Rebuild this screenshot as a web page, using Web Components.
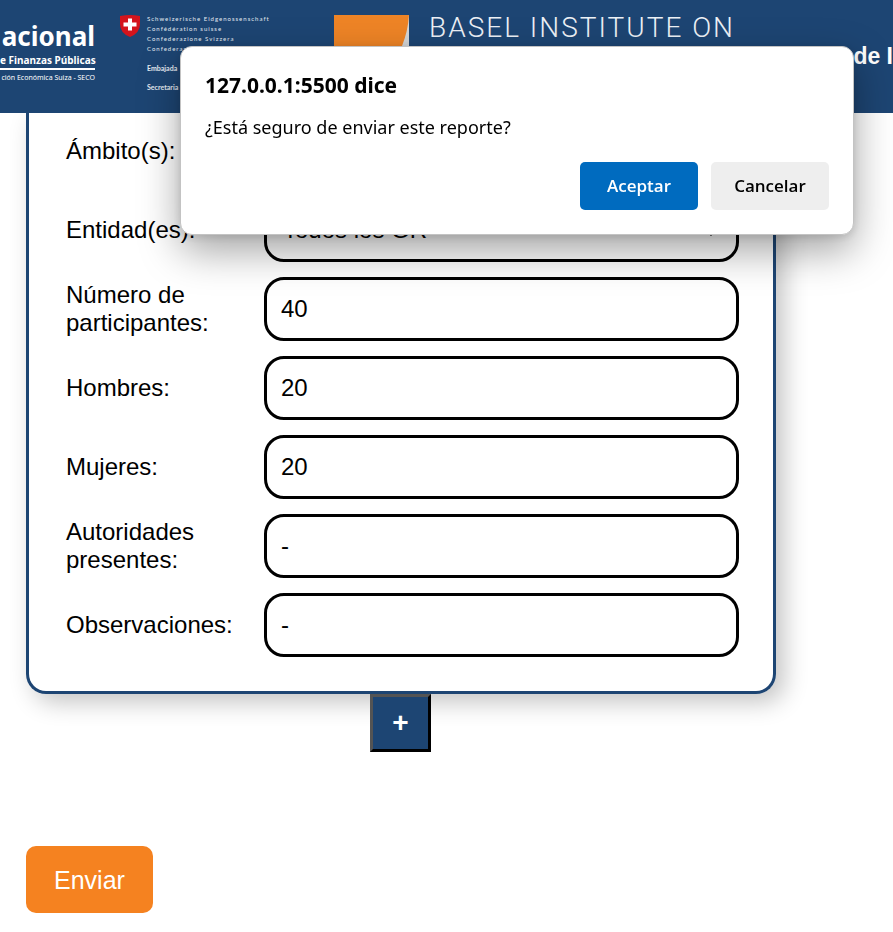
<!DOCTYPE html>
<html lang="es">
<head>
<meta charset="utf-8">
<meta name="viewport" content="width=device-width, initial-scale=1">
<title>Reporte</title>
<style>
  html, body { margin: 0; }
  body { background: #fff; color: #000; font: 24px/28px "Liberation Sans", Arial, sans-serif; --navy: #1d4573; --orange: #f58220; }
</style>
</head>
<body>
<report-page></report-page>

<script>
const define = (name, html, setup) => {
  const template = document.createElement('template');
  template.innerHTML = html;
  customElements.define(name, class extends HTMLElement {
    constructor() {
      super();
      this.attachShadow({ mode: 'open' }).append(template.content.cloneNode(true));
    }
    connectedCallback() { if (setup) setup(this, this.shadowRoot); }
  });
};

define('seco-logo', `
  <style>
    :host { display: flex; flex-direction: column; align-items: flex-end; flex: 0 0 95px; width: 95px; padding-top: 20px; color: #fff; white-space: nowrap; box-sizing: border-box; }
    .big { font: 700 26px/32px "Noto Sans", sans-serif; }
    .mid { font: 700 10px/16px "Noto Sans", sans-serif; width: 95px; text-align: right; border-bottom: 2px solid #fff; }
    .small { font: 7px/16px "Noto Sans", sans-serif; }
  </style>
  <span class="big">acional</span><span class="mid">e Finanzas Públicas</span><span class="small">ción Económica Suiza - SECO</span>`);

define('swiss-logo', `
  <style>
    :host { display: flex; gap: 7px; flex: 0 0 189px; padding-top: 14px; color: #e4ebf2; font: 6px/10px Lato, sans-serif; white-space: nowrap; }
    svg { width: 20px; height: 22px; flex: none; margin-top: 1px; }
    .names { letter-spacing: 1px; }
    .office { font: 700 7px/10px Lato, sans-serif; margin-top: 9px; }
  </style>
  <svg viewBox="0 0 20 22" aria-hidden="true"><path d="M0 1Q10-1 20 1V9Q20 18 10 22Q0 18 0 9Z" fill="#d4141c"/><path d="M8 3.500h4v4h4.500v4H12v4H8v-4H3.500v-4H8z" fill="#fff"/></svg>
  <div>
    <div class="names">Schweizerische Eidgenossenschaft<br>Confédération suisse<br>Confederazione Svizzera<br>Confederaziun svizra</div>
    <div class="office">Embajada</div>
    <div class="office">Secretaria</div>
  </div>`);

define('basel-logo', `
  <style>
    :host { display: flex; gap: 20px; flex: none; padding-top: 15px; color: #edf1f6; white-space: nowrap; }
    svg { width: 75px; height: 75px; }
    span { font: 300 28px/26px Roboto, sans-serif; letter-spacing: 2px; }
  </style>
  <svg viewBox="0 0 75 75" aria-hidden="true"><path fill="#d4d6d8" d="M0 0h75v75H0z"/><path fill="#ee8426" d="M0 0h75Q74 16 68 31Q55 60 0 75z"/></svg>
  <span>BASEL INSTITUTE ON</span>`);

define('site-header', `
  <style>
    :host { display: flex; gap: 25px; height: 113px; background: var(--navy); overflow: hidden; position: relative; z-index: 1; }
    .title { flex: 0 0 36px; margin: 0 0 2px auto; align-self: center; color: #fff; font-weight: 700; font-size: 23px; text-align: right; white-space: nowrap; }
  </style>
  <seco-logo></seco-logo><swiss-logo></swiss-logo><basel-logo></basel-logo>
  <div class="title">de I</div>`);

define('form-field', `
  <style>
    :host { display: grid; grid-template-columns: 198px 1fr; align-items: center; }
    label { padding-right: 20px; }
    input { box-sizing: border-box; width: 100%; height: 64px; border: 3px solid #000; border-radius: 20px; padding: 0 14px; font: inherit; color: inherit; background: #fff; }
  </style>
  <label for="control"></label><input id="control" type="text">`,
  (host, root) => {
    root.querySelector('label').textContent = host.getAttribute('label');
    root.querySelector('input').value = host.getAttribute('value');
  });

define('form-select', `
  <style>
    :host { display: grid; grid-template-columns: 198px 1fr; align-items: center; }
    .box { display: grid; align-items: center; }
    select, svg { grid-area: 1 / 1; }
    select { box-sizing: border-box; width: 100%; height: 64px; border: 3px solid #000; border-radius: 20px; padding: 0 16px; font: inherit; color: inherit; background: #fff; appearance: none; }
    svg { justify-self: end; width: 14px; height: 12px; margin-right: 21px; pointer-events: none; }
  </style>
  <label for="control"></label>
  <div class="box"><select id="control"><option></option></select>
  <svg viewBox="0 0 14 12" fill="none" stroke="#000" stroke-width="2" aria-hidden="true"><path d="M1 4.500l6 6 6-6"/></svg></div>`,
  (host, root) => {
    root.querySelector('label').textContent = host.getAttribute('label');
    root.querySelector('option').textContent = host.getAttribute('value');
  });

define('report-card', `
  <style>
    :host { display: flex; flex-direction: column; gap: 15px; margin: 0 117px 0 26px; padding: 6px 34px 34px 37px; border: 3px solid var(--navy); border-top: 0; border-radius: 0 0 20px 20px; box-shadow: 8px 8px 25px rgba(0,0,0,.24); }
  </style>
  <slot></slot>`);

define('add-button', `
  <style>
    :host { display: flex; justify-content: center; margin: 0 118px 0 26px; }
    button { width: 61px; height: 58px; padding: 0; border: 3px outset #000; background: var(--navy); color: #fff; font: 700 28px/28px "Liberation Sans", Arial, sans-serif; }
  </style>
  <button type="button" aria-label="Agregar">+</button>`);

define('submit-button', `
  <style>
    :host { display: block; margin: 94px 26px 19px; }
    button { padding: 0 28px; height: 67px; border: 0; border-radius: 10px; background: var(--orange); color: #fff; font: 25px/28px "Liberation Sans", Arial, sans-serif; display: block; }
  </style>
  <button type="submit"><slot></slot></button>`);

define('confirm-dialog', `
  <style>
    :host { position: fixed; z-index: 2; top: 46px; right: 39px; width: 674px; box-sizing: border-box; padding: 26px 24px 24px; background: #fff; border: 1px solid #c3c3c3; border-radius: 12px; box-shadow: 0 16px 40px rgba(0,0,0,.36), 0 2px 8px rgba(0,0,0,.12); font-family: "Noto Sans", sans-serif; }
    h2 { margin: 0; font-size: 21px; line-height: 24px; font-weight: 700; }
    p { margin: 19px 0 24px; font-size: 18px; line-height: 22px; }
    .actions { display: flex; justify-content: flex-end; gap: 13px; }
    button { width: 118px; height: 48px; padding: 0; border: 0; border-radius: 5px; font: 600 17px/24px "Open Sans", "Noto Sans", sans-serif; background: #eee; color: #000; }
    .primary { background: #006bbf; color: #fff; }
  </style>
  <div role="alertdialog" aria-labelledby="t" aria-describedby="m">
    <h2 id="t">127.0.0.1:5500 dice</h2>
    <p id="m">¿Está seguro de enviar este reporte?</p>
    <div class="actions"><button class="primary" type="button">Aceptar</button><button type="button">Cancelar</button></div>
  </div>`);

define('report-page', `
  <style>:host { display: block; }</style>
  <site-header></site-header>
  <form>
    <report-card>
      <form-field label="Ámbito(s):" value=""></form-field>
      <form-select label="Entidad(es):" value="Todos los GR"></form-select>
      <form-field label="Número de participantes:" value="40"></form-field>
      <form-field label="Hombres:" value="20"></form-field>
      <form-field label="Mujeres:" value="20"></form-field>
      <form-field label="Autoridades presentes:" value="-"></form-field>
      <form-field label="Observaciones:" value="-"></form-field>
    </report-card>
    <add-button></add-button>
    <submit-button>Enviar</submit-button>
  </form>
  <confirm-dialog></confirm-dialog>`);
</script>
</body>
</html>
